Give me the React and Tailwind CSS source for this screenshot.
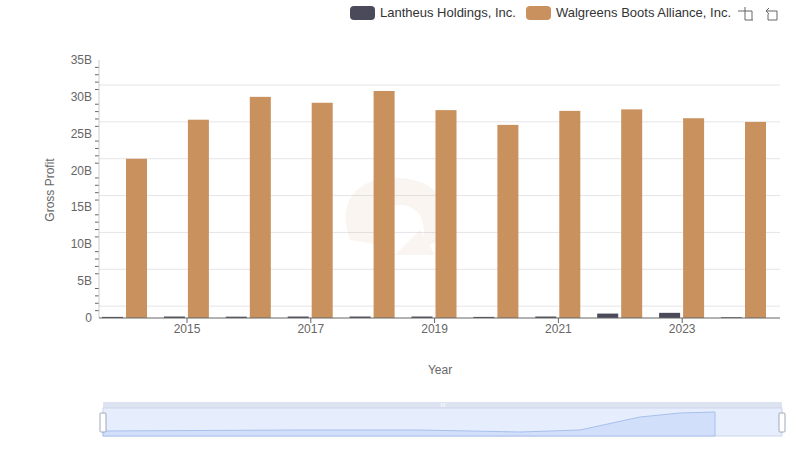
const W=[21.6,26.9,30.0,29.2,30.8,28.2,26.2,28.1,28.3,27.1,26.6];
const L=[0.15,0.2,0.18,0.2,0.2,0.2,0.15,0.2,0.6,0.7,0.1];
const y0=318, k=258/35, sx=99, sw=61.9;
export default function App(){
  const f={fontFamily:'"Liberation Sans",Arial,sans-serif'};
  return (
  <div className="w-[800px] h-[461px] bg-white relative" style={f}>
    <div className="flex items-center justify-end h-[25px] pr-[17px] text-[13px] text-[#333]">
      <div className="w-[25px] h-[14px] rounded-[4px] bg-[#4a4a5a] mr-[5px]"></div>
      <span>Lantheus Holdings, Inc.</span>
      <div className="w-[25px] h-[14px] rounded-[4px] bg-[#c8915e] ml-[10px] mr-[5px]"></div>
      <span>Walgreens Boots Alliance, Inc.</span>
      <svg width="46" height="16" className="ml-[6px]" viewBox="0 0 46 16" fill="none" stroke="#666" strokeWidth="1">
        <path d="M4 6h11v9M8 2v13h8M1 6h3"/>
        <path d="M32 3l-3 3 3 3M29 6h11v9h-9v-6"/>
      </svg>
    </div>
    <svg width="800" height="436" className="block" style={f}>
      {[0,5,10,15,20,25,30,35].map(v=>{const y=y0-v*k;return <g key={v}>
        {v>0&&<line x1={sx} x2={780} y1={y} y2={y} stroke="#e5e5ea"/>}
        <text x={92} y={y-25+4} textAnchor="end" fontSize="12" fill="#666">{v===0?'0':v+'B'}</text>
      </g>})}
      {Array.from({length:35}).map((_,i)=> i%5? <line key={i} x1={95} x2={99} y1={y0-i*k-25} y2={y0-i*k-25} stroke="#666"/>:null)}
      <g transform="translate(0,-25)">
        <line x1={sx} x2={sx} y1={60} y2={y0} stroke="#ccc"/>
        <g opacity="0.08" fill="#c8915e">
          <path d="M350 240 C335 200 360 175 400 178 C440 180 455 210 440 240 L420 250 C430 225 420 205 400 205 C380 205 372 222 380 245 Z"/>
          <path d="M395 255 L435 255 L420 230 Z"/>
        </g>
        {W.map((v,i)=><g key={i}>
          <rect x={sx+i*sw+27} y={y0-v*k} width={21} height={v*k} fill="#c8915e"/>
          <rect x={sx+i*sw+3} y={y0-L[i]*k} width={21} height={L[i]*k} fill="#4a4a5a"/>
        </g>)}
        <line x1={sx} x2={780} y1={y0} y2={y0} stroke="#666"/>
        {[2015,2017,2019,2021,2023].map((yr,j)=>{const x=187+j*2*sw;return <g key={yr}>
          <line x1={x} x2={x} y1={y0} y2={y0+5} stroke="#666"/>
          <text x={x} y={y0+15} textAnchor="middle" fontSize="12" fill="#666">{yr}</text></g>})}
        <text x={440} y={374} textAnchor="middle" fontSize="12" fill="#666">Year</text>
        <text transform="rotate(-90 50 190)" x={50} y={194} textAnchor="middle" fontSize="12" fill="#666">Gross Profit</text>
        <rect x={103} y={402} width={679} height={6} fill="#dde3f0"/>
        <text x={443} y={407} textAnchor="middle" fontSize="6" fill="#fff">III</text>
        <rect x={103} y={408} width={679} height={28} fill="#e6edfc" stroke="#cdd6ea"/>
        <path d="M103 431 L300 430 L420 430 L520 432 L580 430 L640 417 L680 413 L715 412 L715 436 L103 436Z" fill="#d2dffa" stroke="#a8c0ee"/>
        <rect x={100} y={413} width={6} height={19} rx="1" fill="#fff" stroke="#a0a8bb"/>
        <rect x={779} y={413} width={6} height={19} rx="1" fill="#fff" stroke="#a0a8bb"/>
      </g>
    </svg>
  </div>);
}
